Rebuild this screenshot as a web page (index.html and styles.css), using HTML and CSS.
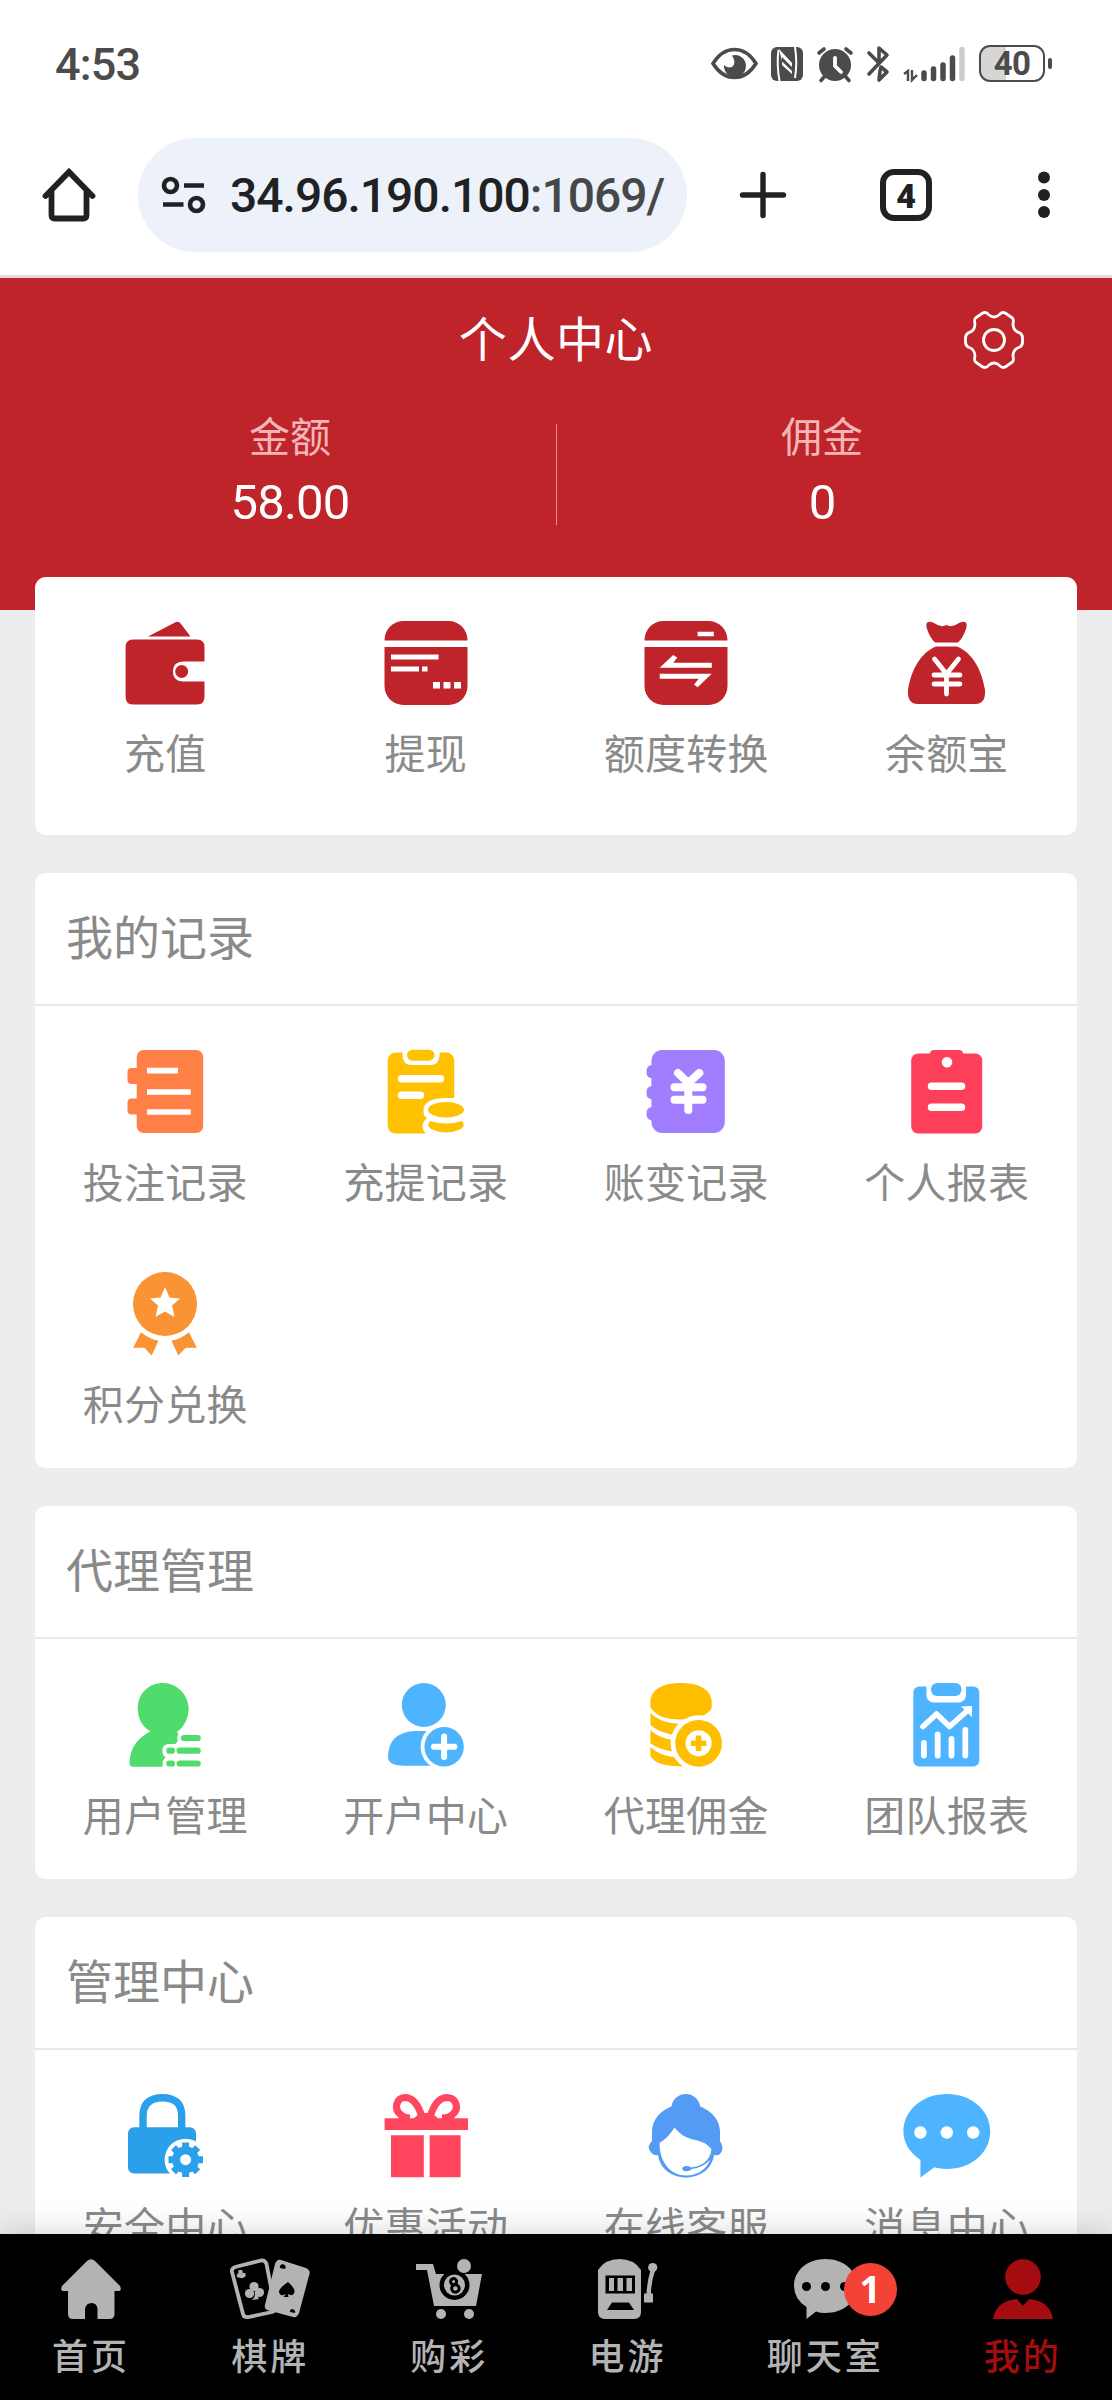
FILE: index.html
```html
<!DOCTYPE html>
<html lang="zh-CN">
<head>
<meta charset="utf-8">
<title>个人中心</title>
<link rel="stylesheet" href="styles.css">
</head>
<body>
<div class="screen">
  <header class="status">
    <span class="time">4:53</span>
    <div class="status-icons">
      <svg class="eye" width="47" height="33" viewBox="0 0 47 33"><path d="M2 16.500C8 7 15 2.500 23.500 2.500S39 7 45 16.500C39 26 32 30.500 23.500 30.500S8 26 2 16.500Z" fill="none" stroke="#4b4b4b" stroke-width="3.600"/><path d="M24 8A11 11 0 1 1 13 18Q16 21.500 21 20Q26 16 21 8.500Z" fill="#4b4b4b"/></svg>
      <svg class="nfc" width="32" height="34" viewBox="0 0 32 34"><rect width="32" height="34" rx="6" fill="#4b4b4b"/><path d="M7.500 3Q5.500 17 8.500 34M24 0Q26.500 16 24 31" fill="none" stroke="#fff" stroke-width="2"/><path d="M7.500 1.500L21 16V20L11 10V14.500L21 24V27L11 18V14L9 6Z" fill="#fff"/></svg>
      <svg class="alarm" width="36" height="36" viewBox="0 0 36 36"><circle cx="18" cy="19" r="16" fill="#4b4b4b"/><path d="M2 7L7 3M34 7L29 3M7 31L4 34.500M29 31L32 34.500" stroke="#4b4b4b" stroke-width="3.600" stroke-linecap="round"/><path d="M18 12V20L24 26" fill="none" stroke="#fff" stroke-width="3.800" stroke-linecap="round" stroke-linejoin="round"/></svg>
      <svg class="bt" width="22" height="36" viewBox="0 0 22 36"><path d="M2 7L12 17V2L20 9L2 28M13 25L14 21L20 26L12 34L13 25" fill="none" stroke="#4b4b4b" stroke-width="3.600" stroke-linecap="round" stroke-linejoin="round"/></svg>
      <svg class="signal" width="62" height="36" viewBox="0 0 62 36"><path d="M1 28L5 25V35M9 24V34L14 29" fill="none" stroke="#4b4b4b" stroke-width="2.400"/><path d="M21 27V32.500M30.500 23V32.500M40 19V32.500M49.500 12V32.500" stroke="#4b4b4b" stroke-width="5.500" stroke-linecap="round"/><path d="M59 3.500V32.500" stroke="#ccc" stroke-width="5.500" stroke-linecap="round"/></svg>
      <div class="battery"><span>40</span></div><i class="battery-tip"></i>
    </div>
  </header>

  <nav class="browser">
    <svg class="home" width="52" height="54" viewBox="0 0 52 54"><path d="M2.500 28L26 4L49.500 28M8.500 24V47Q8.500 50.500 12 50.500H40Q43.500 50.500 43.500 47V24" fill="none" stroke="#202122" stroke-width="5.800" stroke-linecap="round"/></svg>
    <div class="address">
      <svg width="44" height="38" viewBox="0 0 44 38" fill="none" stroke="#202122" stroke-width="4.600"><circle cx="8.500" cy="9.500" r="6.500"/><circle cx="34.500" cy="28.500" r="6.500"/><path d="M22 9.500H42M1 28.500H21.500"/></svg>
      <span class="url">34.96.190.100<span class="port">:1069/</span></span>
    </div>
    <svg class="plus" width="48" height="48" viewBox="0 0 48 48"><path d="M24 3.500V44.500M3.500 24H44.500" stroke="#202122" stroke-width="5.400" stroke-linecap="round"/></svg>
    <div class="tabs">4</div>
    <svg class="more" width="14" height="48" viewBox="0 0 14 48" fill="#202122"><circle cx="7" cy="6.500" r="6"/><circle cx="7" cy="24" r="6"/><circle cx="7" cy="41" r="6"/></svg>
  </nav>

  <main class="content">
    <section class="hero">
      <h1>个人中心</h1>
      <svg class="gear" width="60" height="60" viewBox="-30 -30 60 60" fill="none" stroke="#fff" stroke-width="2.800"><circle r="10.500"/><path d="M-5 -25Q0 -21 5 -25Q8 -29 12 -26.500L18.500 -22Q20 -20 19 -16Q19 -9 26 -7Q29 -5 28.500 0Q29 5 26 7Q19 9 19 16Q20 20 18.500 22L12 26.500Q8 29 5 25Q0 21 -5 25Q-8 29 -12 26.500L-18.500 22Q-20 20 -19 16Q-19 9 -26 7Q-29 5 -28.500 0Q-29 -5 -26 -7Q-19 -9 -19 -16Q-20 -20 -18.500 -22L-12 -26.500Q-8 -29 -5 -25Z"/></svg>
      <div class="balances">
        <div class="balance"><span class="caption">金额</span><span class="amount">58.00</span></div>
        <div class="balance"><span class="caption">佣金</span><span class="amount">0</span></div>
      </div>
    </section>

    <section class="card card-top">
      <div class="grid">
        <a class="tile"><svg class="icon" viewBox="0 0 84 84" fill="#be242a"><path d="M25 15.500L51 2Q55.500-1 58 3L67.500 15.500Z"/><path d="M10 18.500H74Q81.500 18.500 81.500 26V40.500H61Q50 40.500 50 50.500T61 60.500H81.500V76Q81.500 83.500 74 83.500H10Q2.600 83.500 2.600 76V26Q2.600 18.500 10 18.500Z"/><circle cx="58.700" cy="50.500" r="6.500"/></svg><span>充值</span></a>
        <a class="tile"><svg class="icon" viewBox="0 0 84 84"><rect x=".5" y="0" width="83" height="84" rx="19" fill="#be242a"/><path d="M0 19.500H84V26H0ZM7 33.500H54.500V38.500H7ZM7 45.500H35V50.500H7ZM38 45.500H43.500V50.500H38ZM49 61H56V67.500H49ZM59.500 61H66.500V67.500H59.500ZM70 61H77V67.500H70Z" fill="#fff"/></svg><span>提现</span></a>
        <a class="tile"><svg class="icon" viewBox="0 0 84 84"><rect x=".5" y="0" width="83" height="84" rx="19" fill="#be242a"/><path d="M0 19.500H84V26H0ZM53.600 10.800H69.800V15.200H53.600ZM15.700 46.800L29.200 34L33.300 36.500L29.200 41.800H67.800V46.800ZM67.800 52.800L53.600 66.200L50 63.500L54.800 57.800H15.700V52.800Z" fill="#fff"/></svg><span>额度转换</span></a>
        <a class="tile"><svg class="icon" viewBox="0 0 84 84"><path d="M22 8Q19-2 29 2Q36 7 41.500 4Q47 7 54 2Q64-2 61 8Q58 17 53 21.500H30Q25 17 22 8ZM31 25.500H52C68 32 77 50 80 69Q81 83 70 83H13Q2 83 3 69C6 50 15 32 31 25.500Z" fill="#be242a"/><path d="M29.500 38L41.500 53L53.500 38M41.500 53V73M29 54H55M29 63H55" fill="none" stroke="#fff" stroke-width="4.800" stroke-linecap="round"/></svg><span>余额宝</span></a>
      </div>
    </section>

    <section class="card">
      <h2>我的记录</h2>
      <div class="grid">
        <a class="tile"><svg class="icon" viewBox="0 0 84 84"><g fill="#ff8047"><rect x="13.700" width="66.500" height="83" rx="7"/><rect x="4.500" y="18" width="16" height="16" rx="4"/><rect x="4.500" y="48.500" width="16" height="16" rx="4"/></g><path d="M24 20.600H55M24 42H67.700M24 62H67.700" stroke="#fff" stroke-width="5.600"/></svg><span>投注记录</span></a>
        <a class="tile"><svg class="icon" viewBox="0 0 84 84"><rect x="3.700" y="2.500" width="66.500" height="81" rx="8" fill="#ffc200"/><path d="M18.400 0V5Q18.400 15 28 15H46Q55.500 15 55.500 5V0Z" fill="#fff"/><rect x="23" y="-.3" width="27.500" height="11" rx="5.500" fill="#ffc200"/><path d="M17.500 28.700H56.500M17.500 45.200H36.500" stroke="#fff" stroke-width="7.400" stroke-linecap="round"/><path d="M84 48H62Q40 48 39.500 60Q39 66 43 68Q34 76 43 85H84Z" fill="#fff"/><ellipse cx="62" cy="59.700" rx="18" ry="7.700" fill="#ffc200"/><path d="M46 71Q62 76 78 71Q82 75 77 79Q62 86 47 79Q42 75 46 71Z" fill="#ffc200"/></svg><span>充提记录</span></a>
        <a class="tile"><svg class="icon" viewBox="0 0 84 84"><g fill="#a07eff"><rect x="7.400" width="73.400" height="83" rx="11"/><rect x="2.600" y="15.300" width="13" height="13" rx="5"/><rect x="2.600" y="36.300" width="13" height="13" rx="5"/><rect x="2.600" y="57.300" width="13" height="13" rx="5"/></g><path d="M34 23L44.300 33L55.300 23M44.300 33V60M30.500 37.300H58.500M30.500 49.800H58.500" fill="none" stroke="#fff" stroke-width="8" stroke-linecap="round"/></svg><span>账变记录</span></a>
        <a class="tile"><svg class="icon" viewBox="0 0 84 84"><g fill="#fe3f59"><rect x="6.200" y="3.500" width="71" height="80" rx="7"/><rect x="25" width="33" height="12" rx="4"/></g><circle cx="42" cy="12.300" r="5.300" fill="#fff"/><path d="M26.500 36.300H56.500M26.500 57.300H56.500" stroke="#fff" stroke-width="7.500" stroke-linecap="round"/></svg><span>个人报表</span></a>
        <a class="tile"><svg class="icon" viewBox="0 0 84 84"><path d="M18 60.300Q26 67 35.500 68.700L28.700 83.500L21.300 75.700H10.200ZM66 60.300Q58 67 48.500 68.700L55.300 83.500L62.700 75.700H73.800Z" fill="#f99334"/><circle cx="42" cy="32" r="32" fill="#f99334"/><path d="M42 15L46.500 25.500L57 26.500L49 33.500L51.500 45L42 39.500L32.500 45L35 33.500L27 26.500L37.500 25.500Z" fill="#fff"/></svg><span>积分兑换</span></a>
      </div>
    </section>

    <section class="card">
      <h2>代理管理</h2>
      <div class="grid">
        <a class="tile"><svg class="icon" viewBox="0 0 84 84"><path d="M27 48.500Q15 41 14.700 26C14.700 10 26 0 40 0S65.700 12 65.700 26Q65 41 54 49L57 53V83.700H10Q6.500 83.700 6.500 80Q7 59 27 48.500Z" fill="#50dc6c"/><path d="M84 49H59Q53 50 54.500 58Q53 62 49 61H45Q38 62 39.500 70Q40 73 43 74Q39 76 39.500 84H84Z" fill="#fff"/><path d="M61 55H74.700M56.600 67.700H74.700M46.300 67.700H49M56.600 80.500H74.700M46.300 80.500H49" stroke="#50dc6c" stroke-width="6.200" stroke-linecap="round"/></svg><span>用户管理</span></a>
        <a class="tile"><svg class="icon" viewBox="0 0 84 84"><g fill="#4eb4ff"><circle cx="39.800" cy="22" r="22"/><path d="M30 48H58V82.700H22Q4 83 4 74Q4 50 30 48Z"/></g><circle cx="60.100" cy="63.700" r="23.500" fill="#fff"/><circle cx="60.100" cy="63.700" r="19.700" fill="#4eb4ff"/><path d="M60.100 53.500V74M49.900 63.700H70.400" stroke="#fff" stroke-width="6" stroke-linecap="round"/></svg><span>开户中心</span></a>
        <a class="tile"><svg class="icon" viewBox="0 0 84 84"><path d="M6.400 17C9 4 22 0 37 0S65 4 67.700 17V25Q61 36.500 37 36.500T6.400 24ZM6.400 30Q16 40 37 41V53Q16 51 6.400 42ZM6.400 47Q16 57 40 58V70Q16 68 6.400 60ZM6.400 64Q16 74 40 75V83.500Q12 83.500 6.400 73Z" fill="#ffbf00"/><circle cx="54.600" cy="60.300" r="28" fill="#fff"/><circle cx="54.600" cy="60.300" r="18.200" fill="none" stroke="#ffbf00" stroke-width="10.300"/><path d="M54.600 52.500V68M46.800 60.300H62.400" stroke="#ffbf00" stroke-width="5.600"/></svg><span>代理佣金</span></a>
        <a class="tile"><svg class="icon" viewBox="0 0 84 84"><rect x="8.300" y="3.500" width="66" height="80" rx="6" fill="#4eb4ff"/><path d="M21.400 0V11Q21.400 19.500 29 19.500H53Q61 19.500 61 11V0Z" fill="#fff"/><rect x="26" width="30.500" height="13" rx="6" fill="#4eb4ff"/><path d="M18 43.500L31.500 31L44.500 43.500L62 28" fill="none" stroke="#fff" stroke-width="5.600" stroke-linecap="round" stroke-linejoin="round"/><path d="M56 23.500L67 23V34Z" fill="#fff"/><path d="M18.900 60V72.500M32.700 51.500V72.500M46.500 56V72.500M60.300 47V72.500" stroke="#fff" stroke-width="5.800" stroke-linecap="round"/></svg><span>团队报表</span></a>
      </div>
    </section>

    <section class="card">
      <h2>管理中心</h2>
      <div class="grid">
        <a class="tile"><svg class="icon" viewBox="0 0 84 84"><path d="M20 36V22Q20 3.700 39.400 3.700T58.700 22V36" fill="none" stroke="#2ba0ea" stroke-width="7.400"/><rect x="5" y="33.300" width="68" height="46.200" rx="6" fill="#2ba0ea"/><circle cx="62.600" cy="65.700" r="21" fill="#fff"/><circle cx="62.600" cy="65.700" r="9.500" fill="none" stroke="#2ba0ea" stroke-width="8"/><path d="M62.600 48.500V54M62.600 77.500V83M45.500 65.700H51M74.500 65.700H80M50.500 53.600L54.500 57.600M70.700 73.800L74.700 77.800M74.700 53.600L70.700 57.600M54.500 73.800L50.500 77.800" stroke="#2ba0ea" stroke-width="7"/></svg><span>安全中心</span></a>
        <a class="tile"><svg class="icon" viewBox="0 0 84 84"><path d="M.6 24.300H84V36H.6ZM7 41.300H39.800V83.300H7ZM45.600 41.300H76.600V83.300H45.600Z" fill="#ff465e"/><path d="M38 23C34 10 28 3.500 21 3.500C12 4 10 15 16 20Q19 24 26 24M46 23C50 10 56 3.500 63 3.500C73 4 75 15 69 20Q66 24 58 24" fill="none" stroke="#ff465e" stroke-width="7.200"/><path d="M36 19H48L56 26H28Z" fill="#ff465e"/></svg><span>优惠活动</span></a>
        <a class="tile"><svg class="icon" viewBox="0 0 84 84"><circle cx="41.800" cy="14.500" r="14.500" fill="#549bf5"/><path d="M8 47V38C8 21 24 10 41.800 10S76 21 76 38V47Q81 55 76 60Q74 62 70 61C68 75 56 83.500 42 83.500S16 75 14 61Q8 62 5.500 56Q3 52 8 47Z" fill="#549bf5"/><path d="M15.500 49Q24 44 30.500 33.500Q37 42 47 45Q61 47 67.500 55Q67 63 60 69Q55 72.500 47 73.500Q43 71 39 73Q37 75 40 77Q45 78 48 75Q58 74 66 66C62 76 53 81.500 42 81.500C27 81.500 15.500 69 15.500 49Z" fill="#fff"/></svg><span>在线客服</span></a>
        <a class="tile"><svg class="icon" viewBox="0 0 84 84"><path d="M15.400 66V83.500L29 73.500ZM41.800 0C66 0 85.200 16 85.200 37.500S66 75 41.800 75Q35 75 28 73L15.400 66Q-1.600 54-1.600 37.500C-1.600 16 18 0 41.800 0Z" fill="#4eb4ff"/><g fill="#fff"><circle cx="15.400" cy="38.500" r="6.200"/><circle cx="41.800" cy="38.500" r="6.200"/><circle cx="68.200" cy="38.500" r="6.200"/></g></svg><span>消息中心</span></a>
      </div>
    </section>
  </main>

  <nav class="tabbar">
    <a><svg width="60" height="60" viewBox="0 0 60 60"><path d="M26 2Q30-1.500 34 2L59 27Q61 32 58 32H53.500V55Q53.500 60 48 60H36.500V50Q36 44 30.500 44T24 50V60H12Q7 60 7 55V32H2Q-1 32 1 27Z" fill="#b3b3b3"/></svg><span>首页</span></a>
    <a><svg width="80" height="60" viewBox="0 0 80 60"><path d="M7 7.500L31 1.500Q35 1 36.500 5L45 49Q45 52 42 53L19 58Q14 59 13 55L2 13Q1 9 7 7.500Z" fill="#000" stroke="#b3b3b3" stroke-width="3.800"/><path d="M51 1L76 9Q80.500 11 79.500 15L69 54Q67 59 63 58L37 51Q34 49 35 46L45 5Q47 0 51 1Z" fill="#b3b3b3"/><g fill="#b3b3b3"><circle cx="24" cy="27.500" r="4.600"/><circle cx="19.500" cy="34.500" r="4.600"/><circle cx="29.500" cy="33.500" r="4.600"/><path d="M24.500 31L29 40L22 41Q26 38 24.500 31Z"/><circle cx="10.500" cy="13" r="2.300"/><circle cx="9" cy="16.500" r="2.300"/><circle cx="13.500" cy="16" r="2.300"/><path d="M11 15L14 19H10Z"/></g><path d="M58 23Q65 29 64.500 33Q63 38 58 35L58.500 38H53.500L56 35Q50 38 49 33Q49 29 58 23ZM52 5Q57 6 55 10L50 9Q49 7 52 5ZM62 50Q66 51 65 54L60 53Q60 50 62 50Z" fill="#000"/></svg><span>棋牌</span></a>
    <a><svg width="66" height="60" viewBox="0 0 66 60"><path d="M0 5H17L20 15H66L60 47H18L11 11H0Z" fill="#b3b3b3"/><circle cx="38.500" cy="26" r="15" fill="#000"/><circle cx="48" cy="7" r="7" fill="#b3b3b3"/><circle cx="38.500" cy="26" r="10.500" fill="#b3b3b3"/><g transform="rotate(-15 38.500 26)" fill="none" stroke="#000" stroke-width="3"><circle cx="38.500" cy="22.500" r="3"/><circle cx="38.500" cy="29.500" r="3.700"/></g><circle cx="25" cy="55" r="5" fill="#b3b3b3"/><circle cx="53" cy="55" r="5" fill="#b3b3b3"/></svg><span>购彩</span></a>
    <a><svg width="60" height="60" viewBox="0 0 60 60"><path d="M0 11Q7 0 21.500 0T43 11V53Q43 60 36 60H7Q0 60 0 53Z" fill="#b3b3b3"/><path d="M7.500 16.500H37V34.500H7.500ZM14 43.500H31L36 51H9Z"/><path d="M11 19H16V32H11ZM19.500 19H25V32H19.500ZM28.500 19H34V32H28.500ZM46 34.500H48.500Q49 23 52.500 11L57 12Q53 23 53 34.500H55V43.500H46Z" fill="#b3b3b3"/><circle cx="54.700" cy="8.500" r="4.600" fill="#b3b3b3"/></svg><span>电游</span></a>
    <a class="chat"><svg width="63" height="60" viewBox="0 0 63 60"><path d="M31.500 0C49 0 63 11 63 27S49 54 31.500 54Q26 54 22 52.500L12.500 60V48Q0 40 0 27C0 11 14 0 31.500 0Z" fill="#b3b3b3"/><circle cx="12.500" cy="27.500" r="4.500"/><circle cx="31.500" cy="27.500" r="4.500"/><circle cx="50.500" cy="27.500" r="4.500"/></svg><b class="badge">1</b><span>聊天室</span></a>
    <a class="active"><svg width="60" height="60" viewBox="0 0 60 60" fill="#a50c10"><circle cx="30" cy="18" r="17.800"/><path d="M24 40L30 47L36 40Q57 42 60 60H0Q3 42 24 40Z"/></svg><span>我的</span></a>
  </nav>
</div>
</body>
</html>
```
FILE: styles.css
```css
* { box-sizing: border-box; }
body { margin: 0; background: #fff; font-family: "Noto Sans CJK SC", sans-serif; }
svg { display: block; flex: none; overflow: visible; }

.screen { width: 1112px; height: 2400px; display: flex; flex-direction: column; overflow: hidden; }

/* Status bar */
.status { height: 126px; flex: none; padding: 0 60px 0 55px; display: flex; align-items: center; justify-content: space-between; }
.time { padding-top: 3px; font: 500 45px/60px Roboto, sans-serif; letter-spacing: -.8px; color: #4b4b4b; }
.status-icons { display: flex; align-items: center; padding-top: 1px; }
.nfc { margin-left: 13px; }
.alarm { margin-left: 14px; }
.bt { margin-left: 14px; }
.signal { margin-left: 14px; }
.battery { width: 66px; height: 37px; margin-left: 14px; border: 2.5px solid #4b4b4b; border-radius: 11px; background: linear-gradient(90deg, #d6d6d6 40%, #fff 40%); text-align: center; font: 700 33px/34px Roboto, sans-serif; letter-spacing: -.8px; color: #4b4b4b; }
.battery-tip { width: 4px; height: 11px; margin-left: 3px; border-radius: 2px; background: #4b4b4b; }

/* Browser bar */
.browser { height: 149px; flex: none; padding: 12px 61px 0 43px; display: flex; align-items: flex-start; }
.home { margin-top: 30px; }
.address { width: 549px; height: 114px; margin-left: 43px; padding-left: 24px; border-radius: 57px; background: #ecf1fa; display: flex; align-items: center; }
.url { margin-left: 24px; padding-top: 2px; font: 500 48px/60px Roboto, sans-serif; letter-spacing: -1px; color: #202122; white-space: nowrap; }
.port { color: #454849; }
.plus { margin: 33px 0 0 52px; }
.tabs { width: 52px; height: 52px; margin: 31px 0 0 93px; border: 6px solid #202122; border-radius: 14px; font: 900 34px/42px Roboto, sans-serif; text-align: center; color: #202122; }
.more { margin: 33px 0 0 auto; }

/* Page */
.content { flex: 1; min-height: 0; overflow: hidden; background: #ededed; }
.hero { height: 335px; border-top: 3px solid #ecd9dd; background: #be242a; color: #fff; display: grid; grid-template-columns: 1fr auto 1fr; grid-template-rows: 126px 1fr; }
h1 { grid-column: 2; margin: 22px 0 0; font-size: 48px; line-height: 72px; font-weight: 400; letter-spacing: .6px; }
.gear { grid-column: 3; justify-self: end; margin: 32px 88px 0 0; }
.balances { grid-column: 1 / -1; margin: 0 24px; display: grid; grid-template-columns: 1fr 1fr; align-items: start; }
.balance { height: 122px; text-align: center; display: flex; flex-direction: column; background: linear-gradient(#eb8f93, #eb8f93) no-repeat 0 20px / 0 101px; }
.balance + .balance { background-size: 2px 101px; background-position: -1px 20px; }
.caption { font-size: 41px; line-height: 60px; color: #f3b5b8; }
.amount { font: 400 49px/64px Roboto, sans-serif; letter-spacing: -.8px; margin-top: 7px; }

.card { width: 1042px; margin: 0 auto 38px; padding-bottom: 18px; border-radius: 11px; background: #fff; }
.card-top { height: 258px; margin-top: -33px; position: relative; }
.card h2 { height: 133px; margin: 0; padding-left: 31px; border-bottom: 2px solid #e9e9e9; font-size: 47px; line-height: 123px; font-weight: 400; color: #8a8a8a; }
.grid { display: grid; grid-template-columns: repeat(4, 1fr); }
.tile { height: 222px; padding-top: 44px; display: flex; flex-direction: column; align-items: center; }
.icon { width: 84px; height: 84px; }
.tile span { margin-top: 16px; font-size: 41px; line-height: 60px; letter-spacing: .2px; color: #8a8a8a; white-space: nowrap; }

/* Bottom navigation */
.tabbar { position: relative; flex: none; height: 166px; padding: 25px 0 0 2px; display: flex; justify-content: space-around; background: #000; box-shadow: 0 0 30px rgba(0, 0, 0, .18); color: #b3b3b3; }
.tabbar a { position: relative; display: flex; flex-direction: column; align-items: center; }
.tabbar span { margin-top: 9px; font-size: 36px; line-height: 52px; font-weight: 500; letter-spacing: 3px; }
.tabbar .active { color: #a50c10; }
.badge { position: absolute; left: 77px; top: 4px; width: 53px; height: 53px; border-radius: 50%; background: #f44336; color: #fff; font: 700 37px/52px "Noto Sans", sans-serif; text-align: center; }
```
